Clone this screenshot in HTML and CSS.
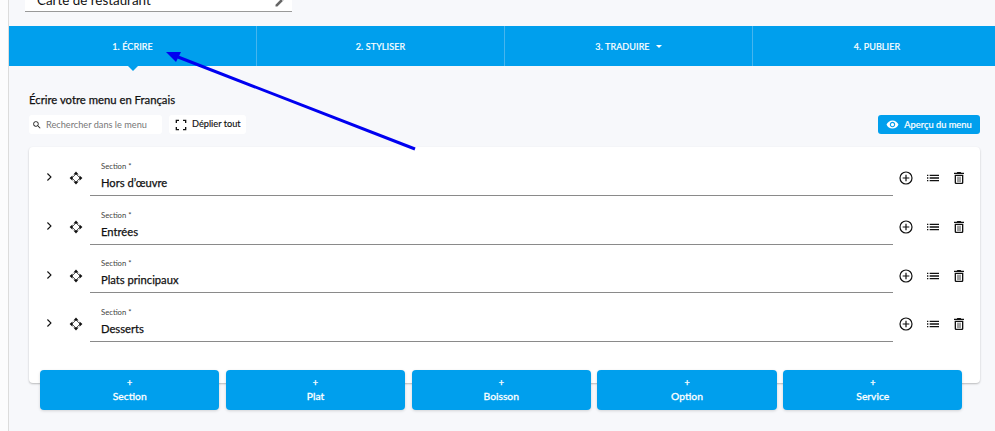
FILE: index.html
```html
<!DOCTYPE html>
<html lang="fr">
<head>
<meta charset="utf-8">
<title>Écrire votre menu</title>
<link rel="stylesheet" href="styles.css">
</head>
<body>
<svg class="defs" width="0" height="0">
  <symbol id="i-chev" viewBox="0 0 24 24"><path d="M8.600 6.700 10 5.300l6.700 6.700-6.700 6.700-1.400-1.400 5.300-5.300z" fill="#111"/></symbol>
  <symbol id="i-move" viewBox="0 0 24 24"><path d="M12 1l4.500 5h-9zM12 23l-4.500-5h9zM1 12l5-4.500v9zM23 12l-5 4.500v-9z" fill="#111"/><path d="M12 5 19 12 12 19 5 12z" fill="none" stroke="#111" stroke-width="1.300"/></symbol>
  <symbol id="i-plus" viewBox="0 0 24 24"><circle cx="12" cy="12" r="9" fill="none" stroke="#111" stroke-width="1.800"/><path d="M7 12h10M12 7v10" stroke="#111" stroke-width="1.800"/></symbol>
  <symbol id="i-list" viewBox="0 0 24 24"><path d="M3 7h2v2H3zM7 7h14v2H7zM3 11h2v2H3zM7 11h14v2H7zM3 15h2v2H3zM7 15h14v2H7z" fill="#111"/></symbol>
  <symbol id="i-trash" viewBox="0 0 24 24"><path d="M5.500 19a2 2 0 0 0 2 2h9a2 2 0 0 0 2-2V7h-13v12zM7.500 9h9v10h-9V9zm8-5-1-1h-5l-1 1H4.500v2h15V4h-4z" fill="#111"/><path d="M10.500 10v8M13.500 10v8" stroke="#111" stroke-width="1.200"/></symbol>
</svg>
<main class="page">
  <div class="title-field">
    <span class="title-text">Carte de restaurant</span>
    <svg class="pencil" viewBox="0 0 24 24" width="12" height="12"><path d="M3 17.250V21h3.750L17.810 9.940l-3.750-3.750L3 17.250zM20.710 7.040a1 1 0 0 0 0-1.410l-2.340-2.340a1 1 0 0 0-1.410 0l-1.830 1.830 3.750 3.750 1.830-1.830z" fill="#666"/></svg>
  </div>
  <nav class="tabs">
    <div class="tab active">1. ÉCRIRE</div>
    <div class="tab">2. STYLISER</div>
    <div class="tab">3. TRADUIRE <span class="caret"></span></div>
    <div class="tab">4. PUBLIER</div>
  </nav>
  <section class="content">
    <h1 class="heading">Écrire votre menu en Français</h1>
    <div class="toolbar">
      <div class="search">
        <svg viewBox="0 0 24 24" width="10" height="10"><path d="M15.500 14h-.79l-.28-.27A6.470 6.470 0 0 0 16 9.500 6.500 6.500 0 1 0 9.500 16c1.610 0 3.090-.59 4.230-1.570l.27.28v.79l5 4.990L20.490 19l-4.990-5zm-6 0C7.010 14 5 11.990 5 9.500S7.010 5 9.500 5 14 7.010 14 9.500 11.990 14 9.500 14z" fill="#222"/></svg>
        <span>Rechercher dans le menu</span>
      </div>
      <div class="expand">
        <svg viewBox="0 0 24 24" width="16" height="16"><path d="M5 9V5h4M15 5h4v4M19 15v4h-4M9 19H5v-4" fill="none" stroke="#111" stroke-width="2"/></svg>
        <span class="expand-label">Déplier tout</span>
      </div>
      <button class="preview">
        <svg viewBox="0 0 24 24" width="13" height="13"><path d="M12 4.500C7 4.500 2.730 7.610 1 12c1.730 4.390 6 7.500 11 7.500s9.270-3.110 11-7.500c-1.730-4.390-6-7.500-11-7.500zM12 17c-2.760 0-5-2.240-5-5s2.240-5 5-5 5 2.240 5 5-2.240 5-5 5zm0-8c-1.660 0-3 1.340-3 3s1.340 3 3 3 3-1.340 3-3-1.340-3-3-3z" fill="#fff"/></svg>
        <span>Aperçu du menu</span>
      </button>
    </div>
    <div class="card">
      <div class="row">
        <svg class="chev"><use href="#i-chev"/></svg>
        <svg class="move"><use href="#i-move"/></svg>
        <div class="field"><label>Section *</label><div class="value">Hors d’œuvre</div></div>
        <div class="actions"><svg><use href="#i-plus"/></svg><svg><use href="#i-list"/></svg><svg><use href="#i-trash"/></svg></div>
      </div>
      <div class="row">
        <svg class="chev"><use href="#i-chev"/></svg>
        <svg class="move"><use href="#i-move"/></svg>
        <div class="field"><label>Section *</label><div class="value">Entrées</div></div>
        <div class="actions"><svg><use href="#i-plus"/></svg><svg><use href="#i-list"/></svg><svg><use href="#i-trash"/></svg></div>
      </div>
      <div class="row">
        <svg class="chev"><use href="#i-chev"/></svg>
        <svg class="move"><use href="#i-move"/></svg>
        <div class="field"><label>Section *</label><div class="value">Plats principaux</div></div>
        <div class="actions"><svg><use href="#i-plus"/></svg><svg><use href="#i-list"/></svg><svg><use href="#i-trash"/></svg></div>
      </div>
      <div class="row">
        <svg class="chev"><use href="#i-chev"/></svg>
        <svg class="move"><use href="#i-move"/></svg>
        <div class="field"><label>Section *</label><div class="value">Desserts</div></div>
        <div class="actions"><svg><use href="#i-plus"/></svg><svg><use href="#i-list"/></svg><svg><use href="#i-trash"/></svg></div>
      </div>
    </div>
    <div class="adders">
      <button class="adder"><span class="plus">+</span>Section</button>
      <button class="adder"><span class="plus">+</span>Plat</button>
      <button class="adder"><span class="plus">+</span>Boisson</button>
      <button class="adder"><span class="plus">+</span>Option</button>
      <button class="adder"><span class="plus">+</span>Service</button>
    </div>
  </section>
</main>
<svg class="annotation" viewBox="0 0 995 431" width="995" height="431">
  <path d="M415 149 178 57" stroke="#0000f0" stroke-width="3" fill="none"/>
  <path d="M166 52 181 52 176 62z" fill="#0000f0"/>
</svg>
</body>
</html>
```
FILE: styles.css
```css
* { box-sizing: border-box; }
html, body { margin: 0; height: 100%; overflow: hidden; background: #fcfcfd; }
body { font-family: "Lato", "Noto Sans", sans-serif; color: #111; padding-left: 8px; position: relative; }
.defs { position: absolute; }
.page { height: 431px; background: #f7f8fb; border-left: 1px solid #dcdcdc; display: flex; flex-direction: column; }
.title-field { width: 267px; height: 12px; margin-left: 16px; background: #fff; border-bottom: 1px solid #999; display: flex; justify-content: space-between; align-items: flex-end; padding: 0 6px 2px 12px; flex: none; overflow: hidden; }
.title-text { font-size: 13.400px; line-height: 16px; margin-bottom: 1px; white-space: nowrap; }
.pencil { margin-bottom: 1px; }
.tabs { margin-top: 14px; height: 40px; background: #009fed; display: grid; grid-template-columns: repeat(4, 248px); flex: none; }
.tab { color: #fff; font-size: 9px; letter-spacing: .1px; -webkit-text-stroke: .2px #fff; display: flex; align-items: center; justify-content: center; gap: 4px; position: relative; border-right: 1px solid #46b5ee; }
.tab:last-child { border-right: 0; }
.tab.active::after { content: ""; position: absolute; left: 50%; bottom: -5px; margin-left: -5px; border: 5px solid transparent; border-bottom: 0; border-top-color: #009fed; }
.caret { width: 0; height: 0; border: 3px solid transparent; border-bottom: 0; border-top-color: #fff; margin-left: 2px; }
.content { padding: 27px 15px 0 20px; display: flex; flex-direction: column; flex: 1; }
.heading { margin: 0; font-size: 11.300px; line-height: 14px; font-weight: 400; -webkit-text-stroke: .25px #111; }
.toolbar { display: flex; align-items: center; margin-top: 8px; height: 19px; }
.search { width: 133px; height: 19px; background: #fff; border-radius: 3px; display: flex; align-items: center; gap: 4px; padding-left: 3px; font-size: 9.200px; color: #777; }
.expand { margin-left: 7px; width: 77px; height: 19px; background: #fff; border-radius: 3px; display: flex; align-items: center; gap: 3px; padding-left: 4px; font-size: 9.200px; -webkit-text-stroke: .15px #111; color: #111; }
.expand-label { margin-bottom: 3px; }
.preview { margin-left: auto; width: 102px; height: 19px; background: #009fed; border: 0; border-radius: 3px; color: #fff; font: 400 9.300px "Lato", sans-serif; -webkit-text-stroke: .2px #fff; display: flex; align-items: center; justify-content: center; gap: 5px; padding: 0; }
.card { margin-top: 13px; height: 236px; flex: none; background: #fff; border-radius: 4px; box-shadow: 0 1px 2px rgba(0,0,0,.25); padding: 6px 12px 0 12px; display: flex; flex-direction: column; }
.row { height: 48.700px; display: flex; align-items: center; flex: none; }
.chev { flex: none; width: 14px; height: 14px; margin-left: 1px; }
.move { flex: none; width: 14px; height: 14px; margin-left: 13px; margin-top: 2px; }
.field { align-self: flex-start; margin-left: 7px; width: 803px; flex: none; height: 43px; border-bottom: 1px solid #8a8a8a; padding: 9px 0 0 11px; }
.field label { display: block; font-size: 7.700px; line-height: 9px; color: #444; }
.value { font-size: 11.200px; line-height: 14px; margin-top: 5px; color: #111; -webkit-text-stroke: .25px #111; }
.actions { margin-left: 5px; display: flex; gap: 10.500px; flex: none; margin-top: 2px; }
.actions svg { width: 16px; height: 16px; }
.adders { display: grid; grid-template-columns: repeat(5, 1fr); gap: 6.300px; margin: -13px 17.500px 0 11px; position: relative; }
.adder { height: 40px; background: #009fed; color: #fff; border: 0; border-radius: 4px; font: 400 10.300px "Lato", sans-serif; -webkit-text-stroke: .3px #fff; display: flex; flex-direction: column; align-items: center; justify-content: center; box-shadow: 0 1px 3px rgba(0,0,0,.15); padding: 0 0 2px; }
.plus { font-size: 9px; line-height: 13px; margin-bottom: 1px; }
.annotation { position: absolute; left: 0; top: 0; pointer-events: none; }
```
